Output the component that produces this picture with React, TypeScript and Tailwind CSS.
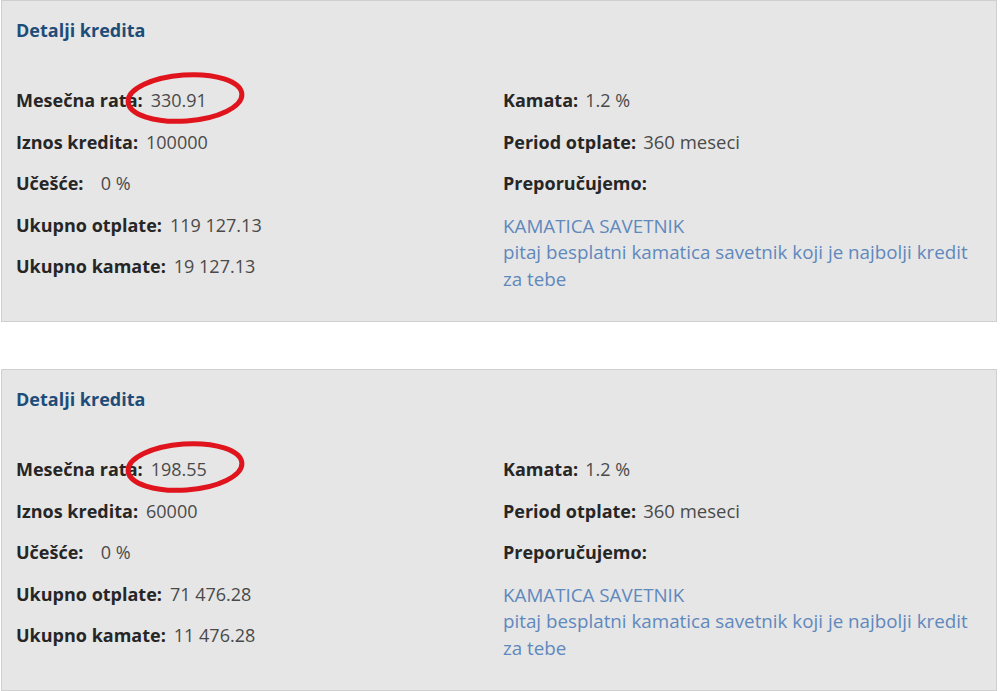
import React from "react";

type Row = [string, string];

function Panel({ left, className }: { left: Row[]; className?: string }) {
  return (
    <div
      className={
        "relative ml-[1px] w-[996px] border border-[#cfcfcf] bg-[#e6e6e6] pl-[14px] pt-[17px] pb-[29px] " +
        (className ?? "")
      }
    >
      <div className="h-[24px] text-[18px] leading-[24px] font-bold text-[#1e4c78]">Detalji kredita</div>
      <div className="mt-[38px] flex">
        <div className="w-[487px] flex flex-col">
          {left.map(([l, v]) => (
            <div key={l} className="h-[41.5px] flex items-center text-[18px] whitespace-pre">
              <span className="font-bold text-[#262626]">{l}</span>
              <span className="ml-[8px] text-[#4a4a4a]">{v}</span>
            </div>
          ))}
        </div>
        <div className="flex flex-col">
          <div className="h-[41.5px] flex items-center text-[18px]">
            <span className="font-bold text-[#262626]">Kamata:</span>
            <span className="ml-[7px] text-[#4a4a4a]">1.2 %</span>
          </div>
          <div className="h-[41.5px] flex items-center text-[18px]">
            <span className="font-bold text-[#262626]">Period otplate:</span>
            <span className="ml-[7px] text-[18.5px] text-[#4a4a4a]">360 meseci</span>
          </div>
          <div className="h-[41.5px] flex items-center text-[18px]">
            <span className="font-bold text-[#262626]">Preporučujemo:</span>
          </div>
          <div className="mt-[8px] w-[476px] text-[18.8px] leading-[26.5px] text-[#6088bd]">
            <div>KAMATICA SAVETNIK</div>
            <div>pitaj besplatni kamatica savetnik koji je najbolji kredit za tebe</div>
          </div>
        </div>
      </div>
      <svg
        className="absolute left-[120px] top-[68px] pointer-events-none"
        width="128"
        height="60"
        viewBox="0 0 128 60"
      >
        <ellipse
          cx="63"
          cy="29"
          rx="57"
          ry="23"
          fill="none"
          stroke="#e0141c"
          strokeWidth="5"
          transform="rotate(-4 63 29)"
        />
      </svg>
    </div>
  );
}

export default function App() {
  return (
    <div
      className="w-[1000px] h-[691px] bg-white overflow-hidden"
      style={{ fontFamily: "'Open Sans', sans-serif" }}
    >
      <Panel
        left={[
          ["Mesečna rata:", "330.91"],
          ["Iznos kredita:", "100000"],
          ["Učešće:", "  0 %"],
          ["Ukupno otplate:", "119 127.13"],
          ["Ukupno kamate:", "19 127.13"],
        ]}
      />
      <Panel
        className="mt-[47px]"
        left={[
          ["Mesečna rata:", "198.55"],
          ["Iznos kredita:", "60000"],
          ["Učešće:", "  0 %"],
          ["Ukupno otplate:", "71 476.28"],
          ["Ukupno kamate:", "11 476.28"],
        ]}
      />
    </div>
  );
}
